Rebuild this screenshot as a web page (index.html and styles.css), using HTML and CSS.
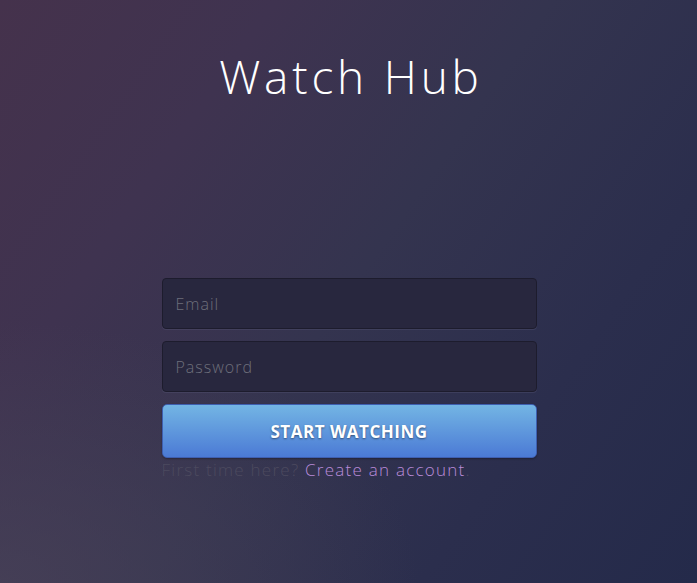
FILE: index.html
```html
<!DOCTYPE html>
<html>
<head>
<meta charset="utf-8">
<link rel="stylesheet" href="styles.css">
</head>
<body>
<main class="page">
  <h1 class="title">Watch Hub</h1>
  <form class="form">
    <input class="field" type="email" placeholder="Email">
    <input class="field" type="password" placeholder="Password">
    <button class="btn" type="button">START WATCHING</button>
    <p class="note">First time here? <a class="link" href="#">Create an account</a>.</p>
  </form>
</main>
</body>
</html>
```
FILE: styles.css
```css
html, body {
  margin: 0;
  height: 100%;
}
body {
  font-family: "Open Sans", "Noto Sans", sans-serif;
  background:
    radial-gradient(ellipse 60% 45% at 0% 100%, rgba(72, 66, 88, 0.75), rgba(72, 66, 88, 0) 100%),
    linear-gradient(125deg, #45324c 0%, #3f3350 25%, #34344f 50%, #2b2e4d 75%, #242a4a 100%);
  overflow: hidden;
}
.page {
  display: flex;
  flex-direction: column;
  align-items: center;
  padding-left: 1px;
}
.title {
  margin: 46px 0 0 4px;
  font-weight: 300;
  font-size: 46px;
  line-height: 60px;
  color: #ffffff;
  letter-spacing: 3.8px;
}
.form {
  margin-top: 172px;
  width: 375px;
  display: flex;
  flex-direction: column;
}
.field {
  box-sizing: border-box;
  height: 51px;
  margin: 0 0 12px;
  padding: 0 13px;
  border: 1px solid #1d1c2d;
  border-radius: 4px;
  background: #28273e;
  box-shadow: 0 1px 0 rgba(90, 88, 120, 0.35);
  font-family: inherit;
  font-size: 16px;
  font-weight: 300;
  letter-spacing: 1px;
  color: #c9c9d4;
  outline: none;
}
.field::placeholder {
  color: #6e6f7b;
}
.btn {
  height: 54px;
  border: 1px solid #3e5fb0;
  border-radius: 5px;
  background: linear-gradient(#73b5e4, #4b7ad5);
  color: #ffffff;
  font-family: inherit;
  font-weight: 700;
  font-size: 17px;
  letter-spacing: 0.5px;
  text-shadow: 0 1px 2px rgba(0, 0, 0, 0.45);
  box-shadow: 0 1px 2px rgba(0, 0, 0, 0.3);
  padding: 0;
}
.note {
  margin: 0;
  font-size: 17px;
  line-height: 24px;
  color: #4c4a5f;
  font-weight: 300;
  letter-spacing: 1.25px;
}
.link {
  color: #b98bd9;
  text-decoration: none;
}
```
